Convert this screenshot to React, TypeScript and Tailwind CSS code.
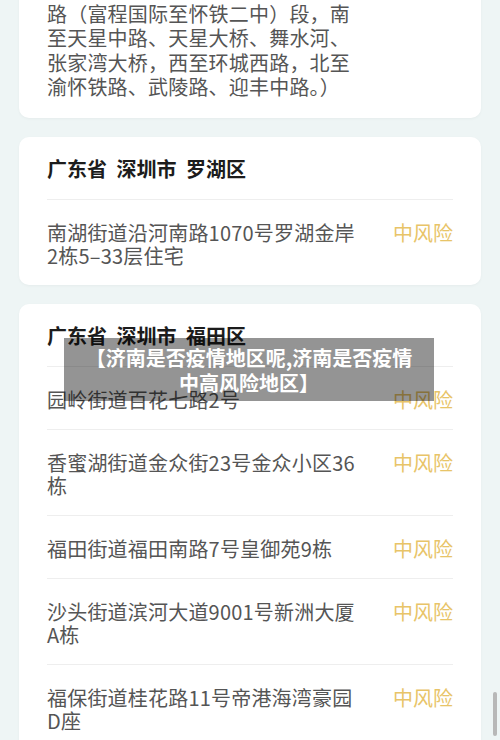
const FONT = "font-['Noto_Sans_CJK_SC','Noto_Sans',sans-serif]";

type Item = { text: string };

function RiskRow({ text, first }: Item & { first?: boolean }) {
  return (
    <div className={`flex items-start justify-between pb-[18.5px] pt-[20.5px] ${first ? "" : "border-t border-[#eeeeee]"}`}>
      <p className="w-[314px] text-[20px] leading-[23px] tracking-[0.2px] text-[#555555]">{text}</p>
      <span className="text-[20px] leading-[23px] text-[#e8c468]">中风险</span>
    </div>
  );
}

function AreaCard({ title, items }: { title: string; items: string[] }) {
  return (
    <div className="rounded-[10px] bg-white px-[28px] pt-[20px] shadow-[0_1px_3px_rgba(0,0,0,0.04)]">
      <h3 className="border-b border-[#eeeeee] pb-[18px] text-[20px] font-bold leading-[24px] text-[#1c1c1c] [word-spacing:5px]">
        {title}
      </h3>
      {items.map((t, i) => (
        <RiskRow key={i} text={t} first={i === 0} />
      ))}
    </div>
  );
}

export default function App() {
  return (
    <div className={`relative h-[740px] w-[500px] overflow-hidden bg-[#eef5f5] ${FONT}`}>
      <div className="flex flex-col gap-[19px] px-[19px]">
        {/* tail of previous card */}
        <div className="-mt-[20px] rounded-[10px] bg-white px-[28px] pb-[19px] pt-[22px] shadow-[0_1px_3px_rgba(0,0,0,0.04)]">
          <p className="w-[314px] text-[20px] leading-[24.3px] tracking-[0.2px] text-[#555555]">
            路（富程国际至怀铁二中）段，南至天星中路、天星大桥、舞水河、张家湾大桥，西至环城西路，北至渝怀铁路、武陵路、迎丰中路。）
          </p>
        </div>

        <AreaCard title="广东省 深圳市 罗湖区" items={["南湖街道沿河南路1070号罗湖金岸2栋5–33层住宅"]} />

        <AreaCard
          title="广东省 深圳市 福田区"
          items={[
            "园岭街道百花七路2号",
            "香蜜湖街道金众街23号金众小区36栋",
            "福田街道福田南路7号皇御苑9栋",
            "沙头街道滨河大道9001号新洲大厦A栋",
            "福保街道桂花路11号帝港海湾豪园D座",
          ]}
        />
      </div>

      {/* caption overlay */}
      <div className="absolute left-[64px] top-[338px] flex h-[63px] w-[370px] items-center justify-center bg-[rgba(0,0,0,0.42)]">
        <p className="text-center text-[20px] font-bold leading-[25px] text-white">
          【济南是否疫情地区呢,济南是否疫情
          <br />
          中高风险地区】
        </p>
      </div>

      {/* scrollbar */}
      <div className="absolute right-[3px] top-[692px] h-[44px] w-[4px] rounded-full bg-[#b8b8b8]" />
    </div>
  );
}
